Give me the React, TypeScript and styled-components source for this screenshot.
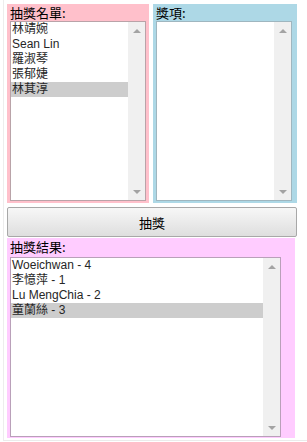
import React from "react";
import styled, { createGlobalStyle } from "styled-components";

const Global = createGlobalStyle`
  html, body { margin: 0; padding: 0; background: #ffffff; }
  body {
    font-family: "Liberation Sans", "Noto Sans CJK TC", Arial, sans-serif;
    font-size: 13px;
    color: #000;
  }
`;

const Frame = styled.div`
  margin-left: 3px;
  width: 310px;
  height: 436px;
  box-sizing: content-box;
  padding: 4px 0 0 3px;
  border-left: 1px solid #ededed;
  border-bottom: 1px solid #ebebeb;
`;

const TopRow = styled.div`
  display: flex;
  gap: 4px;
`;

const Panel = styled.div<{ $bg: string; $w: number; $h: number }>`
  box-sizing: border-box;
  width: ${(p) => p.$w}px;
  height: ${(p) => p.$h}px;
  background: ${(p) => p.$bg};
  padding: 0 0 0 3px;
  display: flex;
  flex-direction: column;
`;

const Label = styled.div<{ $h: number }>`
  height: ${(p) => p.$h}px;
  line-height: 16px;
  padding-top: 1px;
  box-sizing: border-box;
  font-family: "Noto Sans CJK TC", "Liberation Sans", sans-serif;
  font-size: 13px;
  color: #000;
  white-space: nowrap;
`;

const Box = styled.div<{ $w: number; $h: number; $border: string }>`
  box-sizing: border-box;
  width: ${(p) => p.$w}px;
  height: ${(p) => p.$h}px;
  border: 1px solid ${(p) => p.$border};
  background: #fff;
  display: flex;
`;

const Items = styled.div`
  flex: 1;
  min-width: 0;
  display: flex;
  flex-direction: column;
`;

const Item = styled.div<{ $selected?: boolean }>`
  height: 15px;
  line-height: 15px;
  padding-left: 1px;
  font-family: "Liberation Sans", "Noto Sans CJK TC", sans-serif;
  font-size: 12px;
  color: #262626;
  white-space: nowrap;
  overflow: hidden;
  background: ${(p) => (p.$selected ? "#cdcdcd" : "transparent")};
`;

const Scroll = styled.div`
  width: 17px;
  background: #f0f0f0;
  display: flex;
  flex-direction: column;
  justify-content: space-between;
  align-items: center;
  padding: 7px 0 6px;
  box-sizing: border-box;
`;

const Arrow = styled.div<{ $down?: boolean }>`
  width: 0;
  height: 0;
  border-left: 4px solid transparent;
  border-right: 4px solid transparent;
  ${(p) =>
    p.$down
      ? "border-top: 4px solid #a3a3a3;"
      : "border-bottom: 4px solid #a3a3a3;"}
`;

const DrawButton = styled.button`
  display: block;
  box-sizing: border-box;
  margin: 4px 0 1px;
  width: 290px;
  height: 30px;
  border: 1px solid #a8a8a8;
  border-radius: 2px;
  background: linear-gradient(#f7f7f7, #dedede);
  font-family: "Noto Sans CJK TC", "Liberation Sans", sans-serif;
  font-size: 13px;
  color: #000;
  padding: 0;
`;

type ListProps = {
  w: number;
  h: number;
  border: string;
  items: string[];
  selected?: number;
};

function ListBox({ w, h, border, items, selected }: ListProps) {
  return (
    <Box $w={w} $h={h} $border={border}>
      <Items>
        {items.map((t, i) => (
          <Item key={i} $selected={i === selected}>
            {t}
          </Item>
        ))}
      </Items>
      <Scroll>
        <Arrow />
        <Arrow $down />
      </Scroll>
    </Box>
  );
}

export default function App() {
  return (
    <>
      <Global />
      <Frame>
        <TopRow>
          <Panel $bg="#ffc0cb" $w={142} $h={199}>
            <Label $h={17}>抽獎名單:</Label>
            <ListBox
              w={136}
              h={180}
              border="#b9a3a8"
              items={["林靖婉", "Sean Lin", "羅淑琴", "張郁婕", "林萁淳"]}
              selected={4}
            />
          </Panel>
          <Panel $bg="#add8e6" $w={144} $h={199}>
            <Label $h={17}>獎項:</Label>
            <ListBox w={136} h={180} border="#9fb6bf" items={[]} />
          </Panel>
        </TopRow>
        <DrawButton>抽獎</DrawButton>
        <Panel $bg="#ffccff" $w={288} $h={200}>
          <Label $h={19}>抽獎結果:</Label>
          <ListBox
            w={271}
            h={180}
            border="#b9a0b9"
            items={["Woeichwan - 4", "李憶萍 - 1", "Lu MengChia - 2", "童蘭絲 - 3"]}
            selected={3}
          />
        </Panel>
      </Frame>
    </>
  );
}
